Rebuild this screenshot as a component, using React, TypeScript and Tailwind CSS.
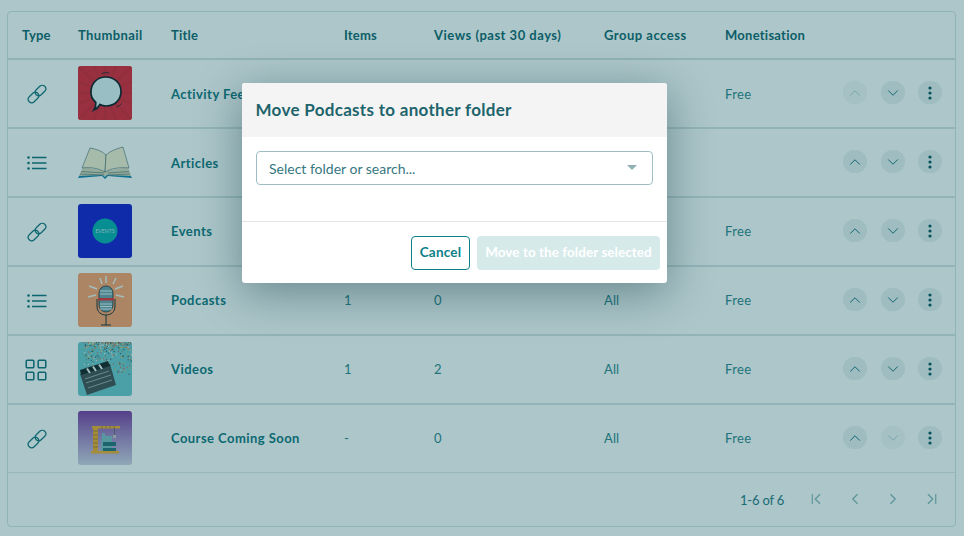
import React from 'react';
import { ChevronDown, ChevronFirst, ChevronLast, ChevronLeft, ChevronRight, ChevronUp, LayoutGrid } from 'lucide-react';

const cols = 'grid grid-cols-[70px_93px_173px_90px_170px_121px_118px_1fr] items-center';

function LinkIcon() {
  return (
    <svg viewBox="0 0 20 20" className="w-5 h-5" fill="none" stroke="#0b6b75" strokeWidth="1.2">
      <rect x="10" y="0.500" width="7" height="12" rx="3.500" transform="rotate(45 13.500 6.500)" />
      <rect x="3" y="7.500" width="7" height="12" rx="3.500" transform="rotate(45 6.500 13.500)" />
    </svg>
  );
}

function ListIcon() {
  return (
    <svg viewBox="0 0 20 20" className="w-5 h-5" fill="#0b6b75" stroke="#0b6b75">
      <circle cx="1.500" cy="4.500" r="1.300" stroke="none" />
      <circle cx="1.500" cy="10" r="1.300" stroke="none" />
      <circle cx="1.500" cy="15.500" r="1.300" stroke="none" />
      <path d="M5 4.500h14.500M5 10h14.500M5 15.500h14.500" strokeWidth="1.500" />
    </svg>
  );
}

function Thumb({ children, bg = '' }: { children: React.ReactNode; bg?: string }) {
  return (
    <div className={`w-[54px] h-[54px] rounded-[3px] overflow-hidden ${bg}`}>
      <svg viewBox="0 0 54 54" className="w-full h-full block">
        {children}
      </svg>
    </div>
  );
}

function Bubble() {
  const rays = Array.from({ length: 16 }, (_, i) => (i * Math.PI) / 8);
  return (
    <Thumb bg="bg-[#e21a2e]">
      {rays.map((a, i) => (
        <line key={i} x1="27" y1="27" x2={27 + Math.cos(a) * 45} y2={27 + Math.sin(a) * 45} stroke="#d81829" strokeWidth="2.400" />
      ))}
      <g transform="translate(1.500 0)">
        <path d="M26 11c9 0 15.500 6 15.500 14.500S35 40 27 40c-3 0-5 -.5-6.500 -1.500C19 41 17 43 14.500 44c1.500 -2 2 -4.500 1.800 -7.500C13 33.500 11 29.500 11.500 25 12 17 18 11 26 11z" fill="#e2f3f8" stroke="#081018" strokeWidth="1.700" />
        <path d="M22 7.500c3-1 6-1 8-.5M37 41c2-.5 4-2 5-3.500" fill="none" stroke="#081018" strokeWidth=".8" />
      </g>
    </Thumb>
  );
}

function Book() {
  return (
    <Thumb>
      <path d="M0 43 4 36 50 36 54 43 30 41 27 44 24 41z" fill="#0a7ba8" />
      <path d="M1 41 5 32 28 36 50 32 53 41 29 40 27 42 24 40z" fill="#d8d6bc" />
      <path d="M3 36.500 L26 38M2 39 L26 40M30 38 L51 36.500M30 40 L52 39" stroke="#5f6f66" strokeWidth=".7" />
      <path d="M4 33 12 13C18 14 24 16 28 20L27 37C20 33 12 32 4 33z" fill="#f8efd0" stroke="#40606a" strokeWidth=".6" />
      <path d="M28 20C32 16 38 14 45 12L51 33C43 32 34 33 27 37z" fill="#f8efd0" stroke="#40606a" strokeWidth=".6" />
    </Thumb>
  );
}

function Events() {
  return (
    <Thumb bg="bg-[#1012d0]">
      <circle cx="27" cy="27" r="12.500" fill="#00a9ab" />
      <text x="27" y="28.800" textAnchor="middle" fontSize="5" fill="#c5dfe6" fontFamily="Lato, sans-serif">EVENTS</text>
    </Thumb>
  );
}

function Mic() {
  const rays = [[22, 5, 24, 11], [28, 3, 28, 10], [38, 5, 35, 11], [11, 13, 19, 16], [45, 13, 37, 16], [10, 24, 18, 22], [46, 24, 38, 22]];
  return (
    <Thumb bg="bg-[#ff9b64]">
      {rays.map((r, i) => (
        <line key={i} x1={r[0]} y1={r[1]} x2={r[2]} y2={r[3]} stroke="#f0f0ea" strokeWidth="1.500" />
      ))}
      <rect x="21" y="13" width="14" height="26" rx="7" fill="#6f9aa6" stroke="#16222a" strokeWidth=".8" />
      <path d="M22 18h12M22 21h12M22 31h12M22 33.500h12M22 36h12" stroke="#e6f0f0" strokeWidth="1" />
      <rect x="20" y="25" width="16" height="2.500" fill="#e8252c" />
      <path d="M19 26v7c0 6 4 9 9 9s9-3 9-9v-7" fill="none" stroke="#16222a" strokeWidth="1" />
      <path d="M28 42v10M23 52h10" stroke="#16222a" strokeWidth="1" />
    </Thumb>
  );
}

function Clapper() {
  // scattered confetti, denser towards the top right
  const dots = Array.from({ length: 280 }, (_, i) => {
    const a = Math.sin(i * 12.9898) * 43758.5453;
    const b = Math.sin(i * 78.233) * 24634.6345;
    const u = a - Math.floor(a);
    const v = b - Math.floor(b);
    return { x: 6 + u * 47, y: v * v * 32, c: ['#c96a5a', '#3a5a60', '#d8b050', '#7a8a80', '#e6e6d8'][i % 5] };
  });
  return (
    <Thumb bg="bg-[#6bc5cd]">
      {dots.map((d, i) => (
        <rect key={i} x={d.x} y={d.y} width="1.200" height="1.200" fill={d.c} />
      ))}
      <path d="M2 32 32 22 38 43 9 53z" fill="#40484a" />
      <path d="M2 28 30 19 32 24 3 33z" fill="#12181a" />
      <path d="M9 26.500 12 31M15 24.500 18 29M21 22.500 24 27" stroke="#f2f2f2" strokeWidth="2" />
      <path d="M7 37 31 29M8 41 33 33M10 46 34 38" stroke="#b0b8b8" strokeWidth=".8" />
    </Thumb>
  );
}

function Crane() {
  return (
    <div className="w-[54px] h-[54px] rounded-[3px] overflow-hidden bg-gradient-to-b from-[#7a2f9e] to-[#d3d0e4]">
      <svg viewBox="0 0 54 54" className="w-full h-full block">
        <path d="M14 15h28v2.500H14zM15 15h5v25h-5z" fill="#f5a623" />
        <path d="M15 20h5M15 24h5M15 28h5M15 32h5M15 36h5M24 15v2.500M28 15v2.500M32 15v2.500M36 15v2.500" stroke="#96702a" strokeWidth=".8" />
        <path d="M36.500 17v7" stroke="#555" strokeWidth=".7" />
        <rect x="35" y="24" width="3" height="3" fill="#c8c0b8" />
        <path d="M24 22h3v3h7v17H23z" fill="#7cb7c0" />
        <path d="M25 31h13v4H25zM25 37h13v4H25z" fill="#226a76" />
        <rect x="13" y="40" width="28" height="2.500" fill="#f5a623" />
      </svg>
    </div>
  );
}

function RoundBtn({ children, faded }: { children: React.ReactNode; faded?: boolean }) {
  return (
    <button className={`w-6 h-[23px] rounded-full flex items-center justify-center ${faded ? 'bg-[#f0f4f5]/70' : 'bg-[#ebf0f1]'}`}>
      {children}
    </button>
  );
}

type Row = {
  type: 'link' | 'list' | 'grid';
  thumb: React.ReactNode;
  title: string;
  items: string;
  views: string;
  group: string;
  price: string;
};

const rows: Row[] = [
  { type: 'link', thumb: <Bubble />, title: 'Activity Feed', items: '', views: '', group: '', price: 'Free' },
  { type: 'list', thumb: <Book />, title: 'Articles', items: '', views: '', group: '', price: '' },
  { type: 'link', thumb: <Events />, title: 'Events', items: '', views: '', group: '', price: 'Free' },
  { type: 'list', thumb: <Mic />, title: 'Podcasts', items: '1', views: '0', group: 'All', price: 'Free' },
  { type: 'grid', thumb: <Clapper />, title: 'Videos', items: '1', views: '2', group: 'All', price: 'Free' },
  { type: 'link', thumb: <Crane />, title: 'Course Coming Soon', items: '-', views: '0', group: 'All', price: 'Free' },
];

export default function App() {
  return (
    <div className="relative w-[964px] h-[536px] overflow-hidden bg-white pt-[11px] px-[7px] text-[13px] tracking-[0.1px] text-[#2a7f88] font-['Lato',sans-serif]">
      <div className="w-[949px] h-[516px] border border-[#d4e2e4] rounded-[4px] flex flex-col">
        <div className={`${cols} h-[48px] pt-[2px] shrink-0 border-b-2 border-[#d4e0e2] font-bold text-[#0a5f69]`}>
          <div className="pl-[14px] tracking-[0.2px]">Type</div>
          <div className="tracking-[0.4px]">Thumbnail</div>
          <div className="tracking-[0.2px]">Title</div>
          <div className="tracking-[0.2px]">Items</div>
          <div className="tracking-[0.5px]">Views (past 30 days)</div>
          <div className="tracking-[0.5px]">Group access</div>
          <div className="tracking-[0.25px]">Monetisation</div>
          <div />
        </div>

        {rows.map((r, i) => {
          const textTop = i < 2 ? 'pt-[2px]' : 'pt-0';
          return (
            <div
              key={r.title}
              className={`${cols} shrink-0 ${i === rows.length - 1 ? 'h-[68px] border-b border-[#e0e9ea]' : 'h-[69px] border-b-2 border-[#d8e3e5]'}`}
            >
              <div className="pl-[19px]">
                {r.type === 'link' && <LinkIcon />}
                {r.type === 'list' && <ListIcon />}
                {r.type === 'grid' && <LayoutGrid className="w-[26px] h-[26px] ml-[-4px] text-[#0b6b75]" strokeWidth={1.400} />}
              </div>
              <div className="mb-[2px]">{r.thumb}</div>
              <div className={`${textTop} font-bold tracking-[0.45px] text-[#0a6f79]`}>{r.title}</div>
              <div className={textTop}>{r.items}</div>
              <div className={textTop}>{r.views}</div>
              <div className={textTop}>{r.group}</div>
              <div className={`${textTop} tracking-[0.4px]`}>{r.price}</div>
              <div className="flex items-center gap-[13.500px] -translate-y-px">
                <RoundBtn faded={i === 0}>
                  <ChevronUp className={`w-[18px] h-[18px] ${i === 0 ? 'text-[#a8cdd1]' : 'text-[#0b6b75]'}`} strokeWidth={1.300} />
                </RoundBtn>
                <RoundBtn faded={i === rows.length - 1}>
                  <ChevronDown className={`w-[18px] h-[18px] ${i === rows.length - 1 ? 'text-[#a8cdd1]' : 'text-[#0b6b75]'}`} strokeWidth={1.300} />
                </RoundBtn>
                <RoundBtn>
                  <svg viewBox="0 0 4 14" className="w-1 h-[14px]" fill="#004f5a">
                    <circle cx="2" cy="2" r="1.600" />
                    <circle cx="2" cy="7" r="1.600" />
                    <circle cx="2" cy="12" r="1.600" />
                  </svg>
                </RoundBtn>
              </div>
            </div>
          );
        })}

        <div className="flex-1 flex items-center pt-[2px] text-[13px]">
          <span className="ml-[732px] tracking-[-0.2px] text-[#1d7580]">1-6 of 6</span>
          <div className="ml-[23px] flex items-center gap-[20.500px] text-[#7fb0b7] -translate-y-[2px]">
            <ChevronFirst className="w-[18px] h-[18px]" strokeWidth={1.500} />
            <ChevronLeft className="w-[18px] h-[18px]" strokeWidth={1.500} />
            <ChevronRight className="w-[18px] h-[18px]" strokeWidth={1.500} />
            <ChevronLast className="w-[18px] h-[18px]" strokeWidth={1.500} />
          </div>
        </div>
      </div>

      {/* dimmed backdrop + dialog */}
      <div className="absolute inset-0 bg-[#125c64]/35">
        <div className="absolute left-[242px] top-[83px] w-[425px] h-[200px] bg-white rounded-[3px] shadow-[0_10px_45px_rgba(0,45,55,0.4)] overflow-hidden flex flex-col">
          <div className="h-[54px] shrink-0 bg-[#f4f4f4] flex items-center pl-[13.500px] text-[17px] tracking-[0.3px] font-bold text-[#1d646c]">
            Move Podcasts to another folder
          </div>
          <div className="h-[85px] shrink-0 border-b border-[#e4e4e4] px-[14px] pt-[14px]">
            <div className="h-[34px] border border-[#9dbfc4] rounded-[4px] flex items-center justify-between pl-3 pr-[15px] text-[14px] tracking-normal text-[#37777f]">
              <span>Select folder or search...</span>
              <span className="w-0 h-0 border-x-[5px] border-x-transparent border-t-[5px] border-t-[#8fb0b5] -translate-y-px" />
            </div>
          </div>
          <div className="flex-1 flex items-center justify-end gap-[7px] pr-[7px] text-[13.500px] font-bold">
            <button className="w-[59px] h-[34px] border border-[#0b7f88] rounded-[4px] tracking-[0.2px] text-[#0b7f88]">Cancel</button>
            <button className="w-[183px] h-[34px] bg-[#d6eaea] rounded-[4px] tracking-[0.05px] text-white">Move to the folder selected</button>
          </div>
        </div>
      </div>
    </div>
  );
}
